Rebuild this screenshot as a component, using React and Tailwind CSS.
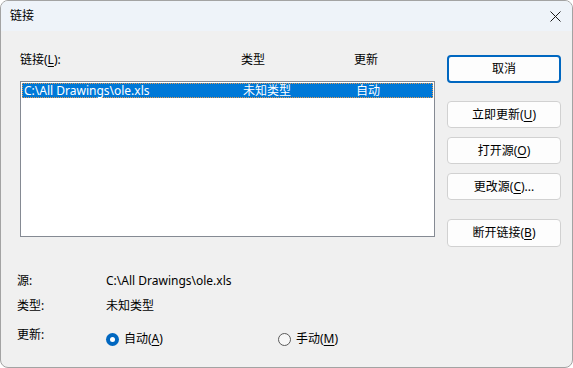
import React from 'react'

// Win11-style "链接" (Edit Links) dialog

const FONT = { fontFamily: '"Noto Sans", "Noto Sans CJK SC", sans-serif' }

function Key({ children }) {
  return <span className="underline underline-offset-2">{children}</span>
}

function Btn({ children, focused, className = '' }) {
  return (
    <div
      className={`flex items-center justify-center rounded-[4px] bg-[#fdfdfd] text-[12px] text-black ${
        focused ? 'border-2 border-[#0067c0]' : 'border border-[#d1d1d1]'
      } ${className}`}
    >
      {children}
    </div>
  )
}

function Radio({ checked, children, className = '' }) {
  return (
    <div className={`flex items-center gap-[5px] ${className}`}>
      {checked ? (
        <span className="flex h-[13px] w-[13px] items-center justify-center rounded-full bg-[#0067c0]">
          <span className="h-[5px] w-[5px] rounded-full bg-white" />
        </span>
      ) : (
        <span className="h-[13px] w-[13px] rounded-full border border-[#5a5a5a] bg-[#f7f7f7]" />
      )}
      <span>{children}</span>
    </div>
  )
}

export default function App() {
  return (
    <div
      style={FONT}
      className="h-[368px] w-[573px] overflow-hidden rounded-lg border border-[#a3a3a3] bg-[#f0f0f0] text-[12px] leading-[16px] text-black"
    >
      {/* title bar */}
      <div className="flex h-[30px] items-center justify-between bg-[#eef3f9] pl-[9px] pr-[10px]">
        <span>链接</span>
        <svg width="11" height="11" viewBox="0 0 11 11" className="mr-[1px]">
          <path d="M0.5 0.5L10.5 10.5M10.5 0.5L0.5 10.5" stroke="#1a1a1a" strokeWidth="1" />
        </svg>
      </div>

      {/* links list + buttons */}
      <div className="flex pl-[19px]">
        <div className="w-[415px] pt-[21px]">
          <div className="flex">
            <span className="w-[221px]">链接(<Key>L</Key>):</span>
            <span className="w-[113px]">类型</span>
            <span>更新</span>
          </div>
          <div className="mt-[13px] h-[156px] border border-[#858a93] bg-white p-[1px]">
            <div className="flex h-[15px] items-center border border-dotted border-[#e49a52] bg-[#0078d7] pl-[1px] text-white">
              <span className="w-[219px] leading-[13px]">C:\All Drawings\ole.xls</span>
              <span className="w-[113px] leading-[13px]">未知类型</span>
              <span className="leading-[13px]">自动</span>
            </div>
          </div>
        </div>

        <div className="ml-[12px] flex w-[114px] flex-col pt-[24px]">
          <Btn focused className="h-[28px]">取消</Btn>
          <Btn className="mt-[18px] h-[27px]">立即更新(<Key>U</Key>)</Btn>
          <Btn className="mt-[9px] h-[27px]">打开源(<Key>O</Key>)</Btn>
          <Btn className="mt-[9px] h-[27px]">更改源(<Key>C</Key>)...</Btn>
          <Btn className="mt-[19px] h-[28px]">断开链接(<Key>B</Key>)</Btn>
        </div>
      </div>

      {/* details */}
      <div className="grid grid-cols-[89px_1fr] gap-y-[9px] pl-[16px] pt-[26px]">
        <span>源:</span>
        <span>C:\All Drawings\ole.xls</span>
        <span>类型:</span>
        <span>未知类型</span>
        <span className="pt-[4px]">更新:</span>
        <div className="flex pt-[8px]">
          <Radio checked className="w-[172px]">
            自动(<Key>A</Key>)
          </Radio>
          <Radio>
            手动(<Key>M</Key>)
          </Radio>
        </div>
      </div>
    </div>
  )
}
